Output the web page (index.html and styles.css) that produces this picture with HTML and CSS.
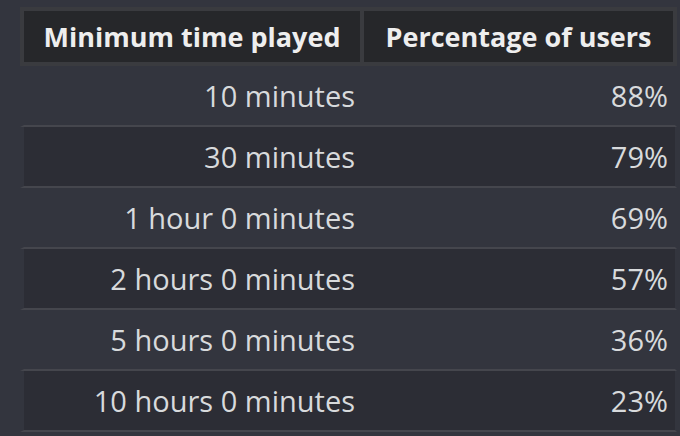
FILE: index.html
```html
<!DOCTYPE html>
<html>
<head>
<meta charset="utf-8">
<link rel="stylesheet" href="styles.css">
</head>
<body>
<table class="playtime">
  <thead>
    <tr><th>Minimum time played</th><th>Percentage of users</th></tr>
  </thead>
  <tbody>
    <tr><td>10 minutes</td><td>88%</td></tr>
    <tr><td>30 minutes</td><td>79%</td></tr>
    <tr><td>1 hour 0 minutes</td><td>69%</td></tr>
    <tr><td>2 hours 0 minutes</td><td>57%</td></tr>
    <tr><td>5 hours 0 minutes</td><td>36%</td></tr>
    <tr><td>10 hours 0 minutes</td><td>23%</td></tr>
  </tbody>
</table>
</body>
</html>
```
FILE: styles.css
```css
html, body {
  margin: 0;
  padding: 0;
  background: #33353e;
  height: 100%;
  overflow: hidden;
}
body {
  padding: 7px 0 0 20px;
  font-family: "Open Sans", "Noto Sans", sans-serif;
  color: #d8dadc;
}
.playtime {
  border-collapse: separate;
  border-spacing: 0;
  width: 657px;
  table-layout: fixed;
}
.playtime th {
  background: #26272a;
  border: 4px solid #3a3b3f;
  color: #eeeeee;
  font-size: 27px;
  font-weight: 700;
  height: 59px;
  padding: 0;
  white-space: nowrap;
  text-align: center;
  box-sizing: border-box;
}
.playtime th:first-child {
  border-right-width: 2px;
  width: 342px;
}
.playtime th:last-child {
  border-left-width: 2px;
}
.playtime td {
  font-size: 29px;
  text-align: right;
  white-space: nowrap;
  height: 61px;
  box-sizing: border-box;
  padding: 0 7px 0 0;
  border-bottom: 2px solid #45464d;
  background-clip: padding-box;
}
.playtime td:first-child {
  border-left: 4px solid transparent;
}
.playtime tbody tr:nth-child(even) td {
  background-color: #2c2d35;
}
.playtime td:last-child {
  border-right: 2px solid transparent;
}
```
